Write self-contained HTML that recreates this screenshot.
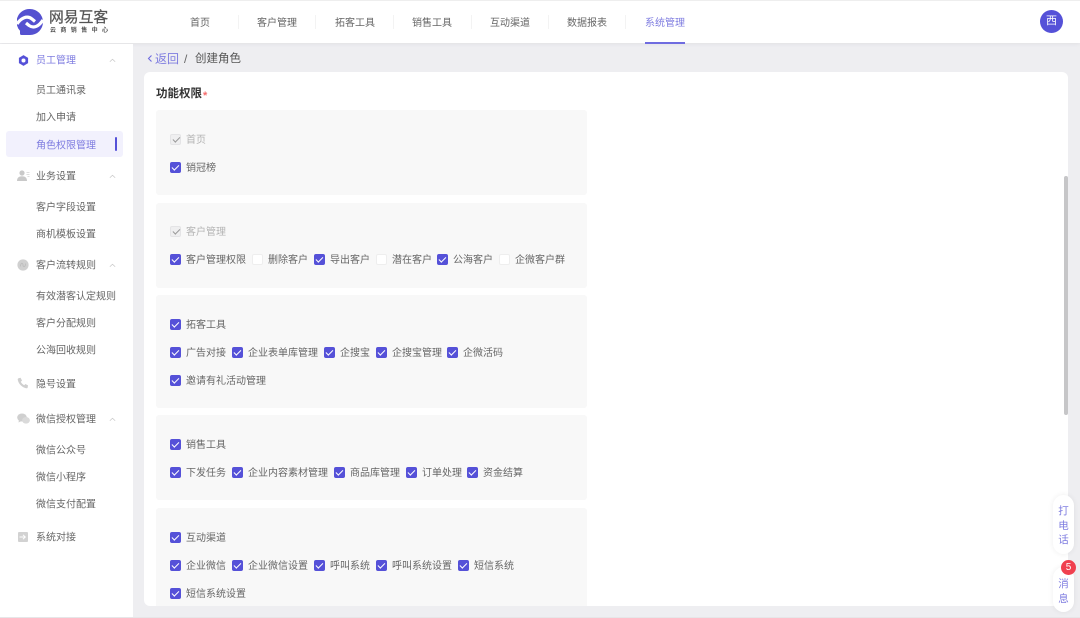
<!DOCTYPE html>
<html lang="zh-CN">
<head>
<meta charset="utf-8">
<title>创建角色</title>
<style>
*{box-sizing:border-box;margin:0;padding:0}
html,body{width:1080px;height:618px;overflow:hidden;background:#eeeef1}
body{position:relative;font-family:"Liberation Sans","Noto Sans CJK SC",sans-serif;font-size:10px;color:#666;filter:blur(.3px)}
.a{position:absolute;white-space:nowrap}
#top{position:absolute;left:0;top:1px;width:1080px;height:42px;background:#fff;box-shadow:0 1px 4px rgba(0,0,0,.06)}
#topline{position:absolute;left:0;top:0;width:1080px;height:1px;background:#eee}
.nav{position:absolute;top:17px;line-height:14px;font-size:10px;color:#666}
.sep{position:absolute;top:15px;width:1px;height:14px;background:#f3f3f3}
#side{position:absolute;left:0;top:44px;width:133px;height:574px;background:#fff}
.s{position:absolute;left:36px;line-height:14px;font-size:10px;color:#666;white-space:nowrap;transform:translateY(1.500px)}
.ar{position:absolute;left:109px;width:7px;height:7px}
.ic{position:absolute}
#panel{position:absolute;left:144px;top:72px;width:924px;height:534px;background:#fff;border-radius:6px;overflow:hidden}
.blk{position:absolute;left:12px;width:431px;background:#f8f8f8;border-radius:3px}
.row{position:absolute;left:26px;height:14px;display:flex;align-items:center;white-space:nowrap;font-size:10px;line-height:14px;color:#666}
.row span{display:block;margin-right:6px;position:relative;top:1.500px}
.row span.n{margin-right:5px}
.row i{display:block;width:10.500px;height:10.500px;margin-right:5.500px;border-radius:2px;background:#5551d8;position:relative;flex:none;top:.5px}
.row i:after{content:"";position:absolute;left:2.400px;top:2.400px;width:5.500px;height:3px;border-left:1.400px solid #fff;border-bottom:1.400px solid #fff;transform:rotate(-45deg)}
.row i.e{background:#fff;border:1px solid #eeeeee}
.row i.e:after{display:none}
.row i.d{background:#efeff0;border:1px solid #e4e4e6}
.row i.d:after{left:1.800px;top:1.800px;border-color:#9a9a9a}
.row.dis{color:#b4b4b4}
.pill{position:absolute;left:1053px;width:21px;background:#fff;border-radius:11px;box-shadow:0 0 6px rgba(0,0,0,.07);color:#7f7de0;font-size:10.500px;line-height:14.500px;text-align:center}
</style>
</head>
<body>
<div id="top"></div>
<div id="topline"></div>

<svg class="ic" style="left:17px;top:9px" width="26" height="26" viewBox="0 0 26 26">
<path d="M13 0a13 13 0 0 1 0 26H4.500A1.500 1.500 0 0 1 3 24.500V21.800A13 13 0 0 1 13 0Z" fill="#5551d0"/>
<path d="M0 15C4 9 10 6 15 10L18 12.500" fill="none" stroke="#fff" stroke-width="3.200"/>
<path d="M9 14 12 16.500C17 20 22 17 26 11" fill="none" stroke="#fff" stroke-width="3.200"/>
</svg>
<div class="a" style="left:49px;top:9px;font-size:14.800px;line-height:18px;color:#555;-webkit-text-stroke:.25px #555">网易互客</div>
<div class="a" style="left:50px;top:27px;font-size:6px;line-height:8px;letter-spacing:4.400px;color:#555;font-weight:bold">云商销售中心</div>

<div class="nav" style="left:190px">首页</div><div class="sep" style="left:238px"></div>
<div class="nav" style="left:257px">客户管理</div><div class="sep" style="left:315px"></div>
<div class="nav" style="left:335px">拓客工具</div><div class="sep" style="left:393px"></div>
<div class="nav" style="left:412px">销售工具</div><div class="sep" style="left:471px"></div>
<div class="nav" style="left:490px">互动渠道</div><div class="sep" style="left:548px"></div>
<div class="nav" style="left:567px">数据报表</div><div class="sep" style="left:625px"></div>
<div class="nav" style="left:645px;color:#7f7de0">系统管理</div>
<div class="a" style="left:645px;top:42px;width:40px;height:2px;background:#6f6ce0"></div>
<div class="a" style="left:1040px;top:10px;width:23px;height:23px;border-radius:50%;background:#5551d8;color:#fff;font-size:11px;line-height:23px;text-align:center">西</div>

<div id="side"></div>
<div class="a" style="left:6px;top:131px;width:117px;height:26px;background:#f2f1fd;border-radius:3px"></div>
<div class="a" style="left:115px;top:137px;width:2px;height:14px;background:#5551d8;border-radius:1px"></div>

<svg class="ic" style="left:17.500px;top:54.500px" width="11" height="11" viewBox="0 0 12 12"><path d="M6 .2 11 3.100V8.900L6 11.800 1 8.900V3.100Z" fill="#5551d8"/><circle cx="6" cy="6" r="2.200" fill="#fff"/></svg>
<svg class="ic" style="left:17px;top:170px" width="13" height="12" viewBox="0 0 13 12"><circle cx="5" cy="3" r="2.600" fill="#c9c9c9"/><path d="M0 11c0-3.500 2-4.800 5-4.800S10 7.500 10 11Z" fill="#c9c9c9"/><path d="M9.500 2.500H12.500M9.500 4.500H12.500M10.500 6.500H12.500" stroke="#d4d4d4" stroke-width=".8"/></svg>
<svg class="ic" style="left:17px;top:259px" width="12" height="12" viewBox="0 0 12 12"><circle cx="6" cy="6" r="5.600" fill="#d0d0d0"/><path d="M3.500 7.500C3.500 3.500 6 3.500 6 6s2.500 2.500 2.500-1.500" fill="none" stroke="#bdbdbd" stroke-width=".9"/></svg>
<svg class="ic" style="left:17px;top:377px" width="12" height="12" viewBox="0 0 12 12"><path d="M1.500 1.200 3.600.8 5 3.600 3.800 4.800C4.500 6.300 5.700 7.500 7.200 8.200L8.400 7 11 8.400 10.700 10.500C10.500 11.200 9.800 11.400 9 11.200 5 10.300 1.700 7 .8 3 .6 2.200.8 1.500 1.500 1.200Z" fill="#cfcfcf"/></svg>
<svg class="ic" style="left:17px;top:413px" width="13" height="12" viewBox="0 0 13 12"><ellipse cx="5" cy="4.500" rx="4.800" ry="4" fill="#cfcfcf"/><path d="M2 7 1.500 9.500 4.500 8Z" fill="#cfcfcf"/><ellipse cx="9" cy="7.300" rx="3.900" ry="3.300" fill="#dadada"/></svg>
<svg class="ic" style="left:18px;top:532px" width="10" height="10" viewBox="0 0 10 10"><rect width="10" height="10" rx="1" fill="#d2d2d2"/><path d="M1.500 5H7M5 2.800 7.300 5 5 7.200" fill="none" stroke="#fff" stroke-width="1"/></svg>

<div class="s" style="top:53px;color:#7f7de0">员工管理</div>
<div class="s" style="top:83px">员工通讯录</div>
<div class="s" style="top:110px">加入申请</div>
<div class="s" style="top:138px;color:#7f7de0">角色权限管理</div>
<div class="s" style="top:169px">业务设置</div>
<div class="s" style="top:200px">客户字段设置</div>
<div class="s" style="top:227px">商机模板设置</div>
<div class="s" style="top:258px">客户流转规则</div>
<div class="s" style="top:289px">有效潜客认定规则</div>
<div class="s" style="top:316px">客户分配规则</div>
<div class="s" style="top:343px">公海回收规则</div>
<div class="s" style="top:377px">隐号设置</div>
<div class="s" style="top:412px">微信授权管理</div>
<div class="s" style="top:443px">微信公众号</div>
<div class="s" style="top:470px">微信小程序</div>
<div class="s" style="top:497px">微信支付配置</div>
<div class="s" style="top:530px">系统对接</div>

<svg class="ar" style="top:57px" viewBox="0 0 7 7"><path d="M.8 4.800 3.500 2.200 6.200 4.800" fill="none" stroke="#c8c8c8" stroke-width=".7"/></svg>
<svg class="ar" style="top:173px" viewBox="0 0 7 7"><path d="M.8 4.800 3.500 2.200 6.200 4.800" fill="none" stroke="#c8c8c8" stroke-width=".7"/></svg>
<svg class="ar" style="top:262px" viewBox="0 0 7 7"><path d="M.8 4.800 3.500 2.200 6.200 4.800" fill="none" stroke="#c8c8c8" stroke-width=".7"/></svg>
<svg class="ar" style="top:416px" viewBox="0 0 7 7"><path d="M.8 4.800 3.500 2.200 6.200 4.800" fill="none" stroke="#c8c8c8" stroke-width=".7"/></svg>

<svg class="ic" style="left:147px;top:54px" width="6" height="9" viewBox="0 0 6 9"><path d="M4.500 1.500 1.500 4.500 4.500 7.500" fill="none" stroke="#6f6ce0" stroke-width="1.100"/></svg>
<div class="a" style="left:155px;top:52px;font-size:12px;line-height:15px;color:#7f7de0">返回</div>
<div class="a" style="left:184px;top:52px;font-size:12px;line-height:15px;color:#666">/</div>
<div class="a" style="left:195px;top:52px;font-size:11.500px;line-height:15px;color:#555">创建角色</div>

<div id="panel">
  <div class="a" style="left:12px;top:15px;font-size:11.500px;line-height:15px;font-weight:bold;color:#333">功能权限</div>
  <div class="a" style="left:59px;top:18px;font-size:11px;line-height:12px;color:#f56c6c;font-weight:bold">*</div>

  <div class="blk" style="top:38px;height:85px"></div>
  <div class="row dis" style="top:60px"><i class="d"></i><span>首页</span></div>
  <div class="row" style="top:88px"><i></i><span>销冠榜</span></div>

  <div class="blk" style="top:131px;height:85px"></div>
  <div class="row dis" style="top:152px"><i class="d"></i><span>客户管理</span></div>
  <div class="row" style="top:180px"><i></i><span>客户管理权限</span><i class="e"></i><span>删除客户</span><i></i><span>导出客户</span><i class="e"></i><span class="n">潜在客户</span><i></i><span>公海客户</span><i class="e"></i><span>企微客户群</span></div>

  <div class="blk" style="top:223px;height:113px"></div>
  <div class="row" style="top:245px"><i></i><span>拓客工具</span></div>
  <div class="row" style="top:273px"><i></i><span>广告对接</span><i></i><span>企业表单库管理</span><i></i><span>企搜宝</span><i></i><span class="n">企搜宝管理</span><i></i><span>企微活码</span></div>
  <div class="row" style="top:301px"><i></i><span>邀请有礼活动管理</span></div>

  <div class="blk" style="top:343px;height:85px"></div>
  <div class="row" style="top:365px"><i></i><span>销售工具</span></div>
  <div class="row" style="top:393px"><i></i><span>下发任务</span><i></i><span>企业内容素材管理</span><i></i><span>商品库管理</span><i></i><span class="n">订单处理</span><i></i><span>资金结算</span></div>

  <div class="blk" style="top:436px;height:110px"></div>
  <div class="row" style="top:458px"><i></i><span>互动渠道</span></div>
  <div class="row" style="top:486px"><i></i><span>企业微信</span><i></i><span>企业微信设置</span><i></i><span>呼叫系统</span><i></i><span>呼叫系统设置</span><i></i><span>短信系统</span></div>
  <div class="row" style="top:514px"><i></i><span>短信系统设置</span></div>

  <div class="a" style="left:920px;top:104px;width:4px;height:239px;background:#c6c6c8;border-radius:2px"></div>
</div>

<div class="pill" style="top:495px;height:59px;padding-top:9px">打<br>电<br>话</div>
<div class="pill" style="top:567px;height:45px;padding-top:10px">消<br>息</div>
<div class="a" style="left:1061px;top:560px;width:15px;height:15px;border-radius:50%;background:#f0404f;color:#fff;font-size:10px;line-height:15px;text-align:center">5</div>
<div class="a" style="left:0;top:617px;width:1080px;height:1px;background:#e6e6e8"></div>
</body>
</html>
